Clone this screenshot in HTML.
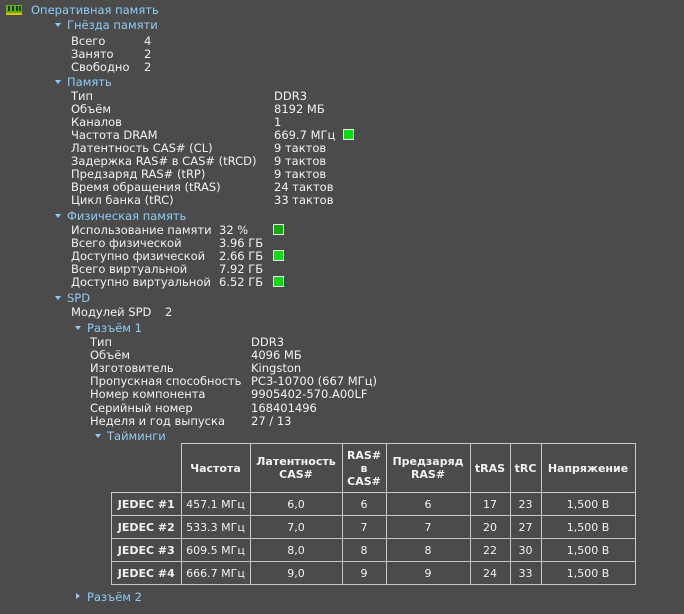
<!DOCTYPE html>
<html><head><meta charset="utf-8"><style>
body{margin:0;width:684px;height:614px;background:#4b4b4b;overflow:hidden;font-family:"DejaVu Sans","Liberation Sans",sans-serif;font-size:11.5px;color:#f2f2f2;position:relative}
.t{position:absolute;line-height:14px;white-space:nowrap;margin-top:1px}
.h{color:#8ccdf5}
.a{position:absolute;width:0;height:0;border-left:3px solid transparent;border-right:3px solid transparent;border-top:4px solid #8ccdf5}
.ar{position:absolute;width:0;height:0;border-top:3px solid transparent;border-bottom:3px solid transparent;border-left:4px solid #8ccdf5}
.g{position:absolute;width:9px;height:9px;background:#00e000;border:1px solid #e8e8e8}
table{position:absolute;left:111px;top:443px;border-collapse:collapse;font-size:11px;color:#f2f2f2}
td{border:1px solid #c8c8c8;text-align:center;padding:0;height:22px}
th{border:1px solid #c8c8c8;font-weight:bold;padding:0}
td.b{font-weight:bold}
</style></head><body>
<svg style="position:absolute;left:6px;top:5px" width="16" height="11"><rect x="0" y="0" width="16" height="8" fill="#5ab400"/><rect x="2" y="1" width="2" height="5" fill="#1a3a00"/><rect x="6" y="1" width="2" height="5" fill="#1a3a00"/><rect x="10" y="1" width="2" height="5" fill="#1a3a00"/><rect x="13" y="1" width="2" height="5" fill="#1a3a00"/><rect x="0" y="8" width="16" height="2" fill="#e0c000"/></svg>
<div class="t h" style="left:31px;top:2px">Оперативная память</div>
<div class="a" style="left:55px;top:23px"></div><div class="t h" style="left:67px;top:17px">Гнёзда памяти</div>
<div class="t" style="left:71px;top:33px">Всего</div><div class="t" style="left:144px;top:33px">4</div>
<div class="t" style="left:71px;top:46px">Занято</div><div class="t" style="left:144px;top:46px">2</div>
<div class="t" style="left:71px;top:59px">Свободно</div><div class="t" style="left:144px;top:59px">2</div>
<div class="a" style="left:55px;top:80px"></div><div class="t h" style="left:67px;top:74px">Память</div>
<div class="t" style="left:71px;top:88px">Тип</div><div class="t" style="left:274px;top:88px">DDR3</div>
<div class="t" style="left:71px;top:101px">Объём</div><div class="t" style="left:274px;top:101px">8192 МБ</div>
<div class="t" style="left:71px;top:114px">Каналов</div><div class="t" style="left:274px;top:114px">1</div>
<div class="t" style="left:71px;top:127px">Частота DRAM</div><div class="t" style="left:274px;top:127px">669.7 МГц</div><div class="g" style="left:343px;top:129px"></div>
<div class="t" style="left:71px;top:140px">Латентность CAS# (CL)</div><div class="t" style="left:274px;top:140px">9 тактов</div>
<div class="t" style="left:71px;top:153px">Задержка RAS# в CAS# (tRCD)</div><div class="t" style="left:274px;top:153px">9 тактов</div>
<div class="t" style="left:71px;top:166px">Предзаряд RAS# (tRP)</div><div class="t" style="left:274px;top:166px">9 тактов</div>
<div class="t" style="left:71px;top:179px">Время обращения (tRAS)</div><div class="t" style="left:274px;top:179px">24 тактов</div>
<div class="t" style="left:71px;top:192px">Цикл банка (tRC)</div><div class="t" style="left:274px;top:192px">33 тактов</div>
<div class="a" style="left:55px;top:214px"></div><div class="t h" style="left:67px;top:208px">Физическая память</div>
<div class="t" style="left:71px;top:222px">Использование памяти</div><div class="t" style="left:219px;top:222px">32 %</div><div class="g" style="left:273px;top:224px;background:#00b000"></div>
<div class="t" style="left:71px;top:235px">Всего физической</div><div class="t" style="left:219px;top:235px">3.96 ГБ</div>
<div class="t" style="left:71px;top:248px">Доступно физической</div><div class="t" style="left:219px;top:248px">2.66 ГБ</div><div class="g" style="left:273px;top:250px"></div>
<div class="t" style="left:71px;top:261px">Всего виртуальной</div><div class="t" style="left:219px;top:261px">7.92 ГБ</div>
<div class="t" style="left:71px;top:274px">Доступно виртуальной</div><div class="t" style="left:219px;top:274px">6.52 ГБ</div><div class="g" style="left:273px;top:276px"></div>
<div class="a" style="left:55px;top:296px"></div><div class="t h" style="left:67px;top:290px">SPD</div>
<div class="t" style="left:71px;top:304px">Модулей SPD</div><div class="t" style="left:165px;top:304px">2</div>
<div class="a" style="left:75px;top:326px"></div><div class="t h" style="left:87px;top:320px">Разъём 1</div>
<div class="t" style="left:90px;top:334px">Тип</div><div class="t" style="left:251px;top:334px">DDR3</div>
<div class="t" style="left:90px;top:347px">Объём</div><div class="t" style="left:251px;top:347px">4096 МБ</div>
<div class="t" style="left:90px;top:360px">Изготовитель</div><div class="t" style="left:251px;top:360px">Kingston</div>
<div class="t" style="left:90px;top:373px">Пропускная способность</div><div class="t" style="left:251px;top:373px">PC3-10700 (667 МГц)</div>
<div class="t" style="left:90px;top:386px">Номер компонента</div><div class="t" style="left:251px;top:386px">9905402-570.A00LF</div>
<div class="t" style="left:90px;top:400px">Серийный номер</div><div class="t" style="left:251px;top:400px">168401496</div>
<div class="t" style="left:90px;top:413px">Неделя и год выпуска</div><div class="t" style="left:251px;top:413px">27 / 13</div>
<div class="a" style="left:95px;top:434px"></div><div class="t h" style="left:107px;top:428px">Тайминги</div>
<table>
<tr style="height:49px"><td style="border:none;border-bottom:1px solid #c8c8c8;width:69px"></td><th style="width:68px">Частота</th><th style="width:91px">Латентность<br>CAS#</th><th style="width:43px">RAS#<br>в<br>CAS#</th><th style="width:83px">Предзаряд<br>RAS#</th><th style="width:39px">tRAS</th><th style="width:30px">tRC</th><th style="width:93px">Напряжение</th></tr>
<tr><td class="b">JEDEC #1</td><td>457.1 МГц</td><td>6,0</td><td>6</td><td>6</td><td>17</td><td>23</td><td>1,500 В</td></tr>
<tr><td class="b">JEDEC #2</td><td>533.3 МГц</td><td>7,0</td><td>7</td><td>7</td><td>20</td><td>27</td><td>1,500 В</td></tr>
<tr><td class="b">JEDEC #3</td><td>609.5 МГц</td><td>8,0</td><td>8</td><td>8</td><td>22</td><td>30</td><td>1,500 В</td></tr>
<tr><td class="b">JEDEC #4</td><td>666.7 МГц</td><td>9,0</td><td>9</td><td>9</td><td>24</td><td>33</td><td>1,500 В</td></tr>
</table>
<div class="ar" style="left:76px;top:593px"></div><div class="t h" style="left:87px;top:589px">Разъём 2</div>
</body></html>
